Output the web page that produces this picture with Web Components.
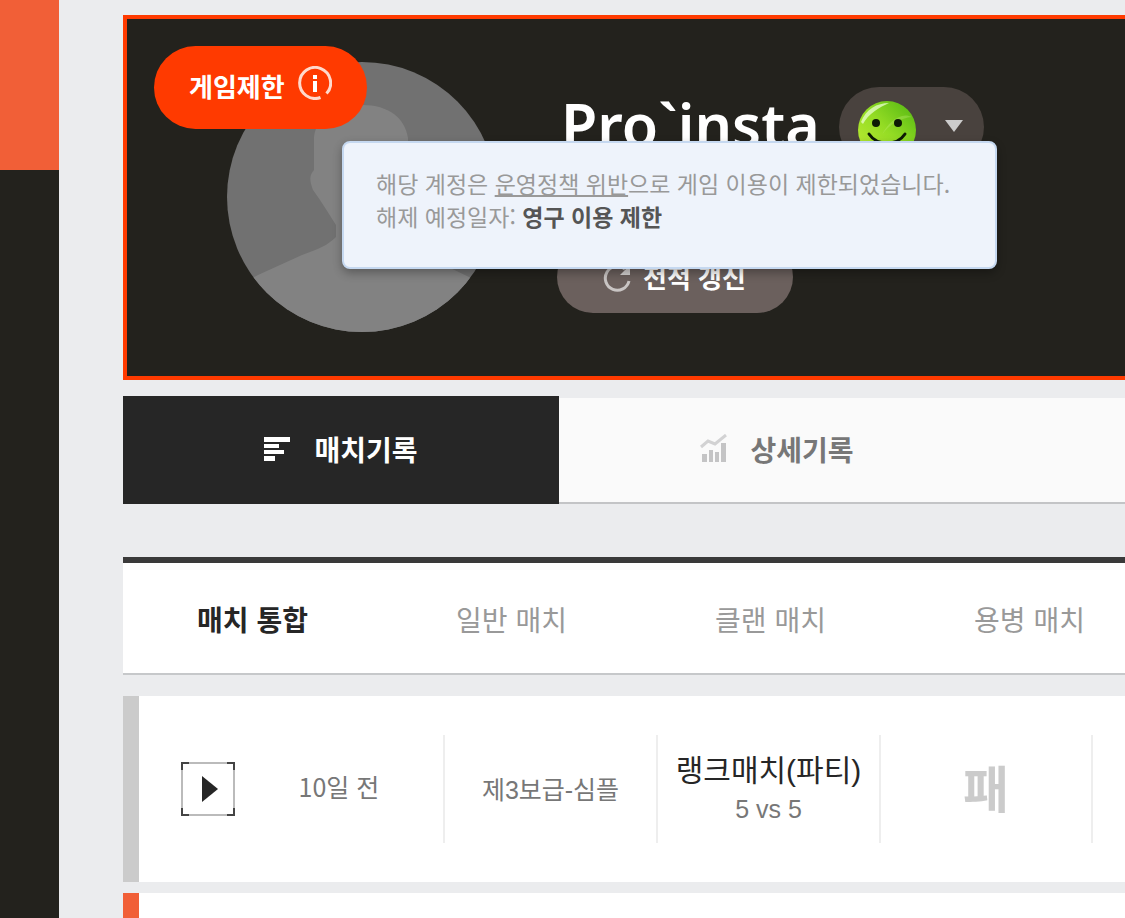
<!DOCTYPE html>
<html lang="ko">
<head>
<meta charset="utf-8">
<meta name="viewport" content="width=device-width, initial-scale=1">
<title>Pro`insta</title>
<style>
  html { overflow: hidden; }
  body {
    margin: 0;
    background: #ebecee;
    color: #262626;
    font-family: "Noto Sans CJK KR", sans-serif;
  }
</style>
</head>
<body>
<app-shell>
  <side-rail slot="rail"></side-rail>
  <profile-card>
    <restrict-badge slot="badge">게임제한</restrict-badge>
    <user-avatar slot="avatar"></user-avatar>
    <span slot="name">Pro`insta</span>
    <mood-picker slot="mood"></mood-picker>
    <refresh-button slot="action">전적 갱신</refresh-button>
    <notice-tip slot="tip"></notice-tip>
  </profile-card>
  <record-tabs></record-tabs>
  <match-filter></match-filter>
  <match-list>
    <match-row>
      <span slot="time">10일 전</span>
      <span slot="map">제3보급-심플</span>
      <span slot="mode">랭크매치(파티)</span>
      <span slot="size">5 vs 5</span>
      <span slot="result">패</span>
    </match-row>
    <match-row win></match-row>
  </match-list>
</app-shell>

<script>
  function define(name, html) {
    const template = document.createElement('template');
    template.innerHTML = html;
    customElements.define(name, class extends HTMLElement {
      constructor() {
        super();
        this.attachShadow({ mode: 'open' }).appendChild(template.content.cloneNode(true));
      }
    });
  }

  define('app-shell', `
    <style>
      :host { display: grid; grid-template-columns: 59px minmax(0, 1fr); height: 100vh; overflow: hidden; }
      main { display: flex; flex-direction: column; padding: 15px 0 0 64px; min-width: 0; overflow: hidden; }
    </style>
    <slot name="rail"></slot>
    <main><slot></slot></main>`);

  define('side-rail', `
    <style>
      :host { display: block; background: #23221d; }
      div { height: 170px; background: #f15f37; }
    </style>
    <div></div>`);

  define('profile-card', `
    <style>
      :host {
        display: flex; position: relative; flex: none; box-sizing: border-box; height: 365px;
        border: 4px solid #ff3a00; border-right: 0; background: #23221d;
        padding: 43px 0 0 100px; gap: 60px;
      }
      .badge { position: absolute; left: 27px; top: 27px; z-index: 1; }
      .tip { position: absolute; left: 215px; top: 122px; z-index: 2; }
      .info { display: flex; flex-direction: column; align-items: flex-start; padding-top: 25px; gap: 74px; }
      .who { display: flex; align-items: flex-start; height: 80px; }
      h1 { box-sizing: border-box; margin: 0; width: 282px; padding-left: 4px; color: #fff; font: 600 59px/74px "Noto Sans", sans-serif; white-space: nowrap; }
    </style>
    <div class="badge"><slot name="badge"></slot></div>
    <slot name="avatar"></slot>
    <div class="info">
      <div class="who"><h1><slot name="name"></slot></h1><slot name="mood"></slot></div>
      <slot name="action"></slot>
    </div>
    <div class="tip"><slot name="tip"></slot></div>`);

  define('restrict-badge', `
    <style>
      :host { display: block; }
      button {
        display: flex; align-items: center; gap: 13px; width: 213px; height: 83px; padding: 0 0 4px 35px;
        border: 0; border-radius: 42px; background: #ff3a00; color: #fff;
        font: 700 26px/38px "Noto Sans CJK KR", sans-serif; white-space: nowrap;
      }
      svg { flex: none; margin-bottom: 6px; }
    </style>
    <button type="button"><slot></slot>
      <svg width="34" height="34" viewBox="0 0 34 34" fill="none" stroke="#ffd9cc" stroke-width="3" aria-hidden="true">
        <path d="M22.5 31.5A15.500 15.500 0 1 1 28.500 27.500"/>
        <path d="M17 9v4M17 15v11" stroke="#fff" stroke-width="4"/>
      </svg>
    </button>`);

  define('user-avatar', `
    <style>:host { display: block; flex: none; width: 270px; height: 270px; } svg { display: block; }</style>
    <svg width="270" height="270" viewBox="0 0 270 270" role="img" aria-label="프로필">
      <defs><clipPath id="disc"><circle cx="135" cy="135" r="135"/></clipPath></defs>
      <g clip-path="url(#disc)">
        <path fill="#717171" d="M0 0h270v270H0z"/>
        <path fill="#828282" d="M87 75C90 54 108 43 135 43C162 43 178 56 181 76V104L186 108C187 124 177 139 162 159V173C166 181 178 187 194 192L240 214L270 230V270H0V230L31 213L75 193C92 187 101 183 109 175V163C102 152 94 139 86 128C81 115 84 112 87 108Z"/>
      </g>
    </svg>`);

  define('mood-picker', `
    <style>
      :host { display: block; }
      button { display: flex; align-items: center; gap: 28px; width: 145px; height: 80px; padding: 0 0 0 18px; border: 0; border-radius: 40px; background: #49423e; }
      svg { display: block; flex: none; }
      .face { margin-top: 8px; }
      .arrow { margin-bottom: 2px; }
    </style>
    <button type="button" aria-label="기분 선택">
      <svg class="face" width="60" height="60" viewBox="0 0 60 60" aria-hidden="true">
        <defs>
          <linearGradient id="g" x1="0" y1="1" x2="1" y2="0">
            <stop offset="0" stop-color="#c2ee35"/><stop offset=".5" stop-color="#94dc24"/><stop offset="1" stop-color="#4fb511"/>
          </linearGradient>
        </defs>
        <circle cx="30" cy="29" r="29" fill="url(#g)"/>
        <path d="M4 21C9 8 20 2 32 2C23 6 11 13 6 23Z" fill="#e9ffd2" opacity=".75"/>
        <path d="M25 34C30 22 44 10 55 16C44 17 32 23 25 34Z" fill="#c7f27d" opacity=".3"/>
        <circle cx="19" cy="22" r="4" fill="#0d1b05"/><circle cx="41" cy="22" r="4" fill="#0d1b05"/>
        <path d="M12 33C20 45 40 45 48 33" fill="none" stroke="#0d1b05" stroke-width="3" stroke-linecap="round"/>
      </svg>
      <svg class="arrow" width="18" height="12" viewBox="0 0 18 12" aria-hidden="true"><path d="M0 0H18L9 12Z" fill="#ccc"/></svg>
    </button>`);

  define('refresh-button', `
    <style>
      :host { display: block; }
      button {
        display: flex; align-items: center; gap: 12px; width: 236px; height: 72px; padding: 0 0 0 46px;
        border: 0; border-radius: 36px; background: #6b605d; color: #fff;
        font: 700 26px/38px "Noto Sans CJK KR", sans-serif; white-space: nowrap;
      }
      svg { flex: none; margin-top: 2px; }
    </style>
    <button type="button">
      <svg width="28" height="28" viewBox="0 0 28 28" aria-hidden="true">
        <path d="M26 17A12 12 0 1 1 22 5" fill="none" stroke="#c9c5c4" stroke-width="3"/>
        <path d="M27 1V11H17Z" fill="#d5d2d1"/>
      </svg><slot></slot>
    </button>`);

  define('notice-tip', `
    <style>
      :host {
        display: block; box-sizing: border-box; width: 655px; padding: 24px 0 34px 32px;
        border: 2px solid #c5d8f0; border-radius: 8px; background: #eef3fb;
        box-shadow: 0 4px 10px rgba(0, 0, 0, .3);
        color: #999; font-size: 23px; line-height: 33px; white-space: nowrap;
      }
      p { margin: 0; }
      a { color: inherit; text-decoration: underline; }
      strong { color: #555; font-weight: 700; }
    </style>
    <div role="tooltip">
      <p>해당 계정은 <a href="#policy">운영정책 위반</a>으로 게임 이용이 제한되었습니다.</p>
      <p>해제 예정일자: <strong>영구 이용 제한</strong></p>
    </div>`);

  define('record-tabs', `
    <style>
      :host { display: block; flex: none; margin-top: 16px; }
      nav { display: flex; height: 108px; }
      a {
        display: flex; flex: 0 0 436px; box-sizing: border-box; align-items: center; justify-content: center; gap: 23px;
        margin-top: 2px; padding-bottom: 2px; border-bottom: 2px solid #c3c4c6; background: #fafafa; color: #777;
        font-size: 28px; font-weight: 700; line-height: 42px; text-decoration: none;
      }
      a[aria-current] { margin-top: 0; border: 0; background: #262626; color: #fff; }
      svg { flex: none; }
    </style>
    <nav>
      <a href="#matches" aria-current="page">
        <svg width="27" height="26" viewBox="0 0 27 26" fill="#fff" aria-hidden="true"><path d="M0 1h26v5H0zM0 8h15v4H0zM0 14h20v4H0zM0 20h11v5H0z"/></svg>
        매치기록
      </a>
      <a href="#details">
        <svg width="27" height="30" viewBox="0 0 27 30" aria-hidden="true">
          <path d="M1 13L8 7L15 10L26 1" fill="none" stroke="#d2d2d3" stroke-width="3"/>
          <path d="M2 20h5v8H2zM9 16h4v12H9zM15 18h4v10h-4zM21 9h5v19h-5z" fill="#c4c4c5"/>
        </svg>
        상세기록
      </a>
      <a href="#more" aria-label="더보기"></a>
    </nav>`);

  define('match-filter', `
    <style>
      :host { display: block; flex: none; margin-top: 53px; border-top: 6px solid #3a3a3a; border-bottom: 2px solid #c6c8ca; background: #fff; }
      nav { display: flex; height: 110px; }
      a { flex: 0 0 259px; color: #999; font-size: 28px; line-height: 112px; text-align: center; text-decoration: none; }
      a[aria-current] { color: #262626; font-weight: 700; }
    </style>
    <nav>
      <a href="#all" aria-current="page">매치 통합</a>
      <a href="#normal">일반 매치</a>
      <a href="#clan">클랜 매치</a>
      <a href="#mercenary">용병 매치</a>
    </nav>`);

  define('match-list', `
    <style>:host { display: flex; flex: none; flex-direction: column; gap: 11px; margin-top: 21px; }</style>
    <slot></slot>`);

  define('match-row', `
    <style>
      :host { display: flex; align-items: center; box-sizing: border-box; height: 186px; padding-left: 42px; border-left: 16px solid #cbcbcb; background: #fff; color: #777; font-size: 25px; line-height: 38px; white-space: nowrap; }
      :host([win]) { border-color: #f15f37; }
      button { display: block; flex: none; padding: 0; border: 0; background: none; }
      svg { display: block; }
      .cell { display: flex; flex: none; flex-direction: column; align-items: center; justify-content: center; box-sizing: border-box; height: 108px; border-right: 2px solid #eee; }
      .time { width: 210px; padding-bottom: 6px; }
      .map { width: 213px; padding-top: 2px; font-family: "Liberation Sans", "Noto Sans CJK KR", sans-serif; }
      .mode { width: 223px; padding-top: 2px; font-family: "Liberation Sans", "Noto Sans CJK KR", sans-serif; }
      .mode b { color: #262626; font-size: 30px; font-weight: 400; }
      .result { width: 212px; padding-bottom: 6px; color: #cbcbcb; font-size: 50px; font-weight: 700; line-height: 70px; }
    </style>
    <button type="button" aria-label="재생">
      <svg width="54" height="54" viewBox="0 0 54 54" aria-hidden="true">
        <path d="M1 1H53V53H1Z" fill="none" stroke="#bbb" stroke-width="2"/>
        <path d="M1 8V1H8M46 1H53V8M53 46V53H46M8 53H1V46" fill="none" stroke="#444" stroke-width="2"/>
        <path d="M21 14L37 27L21 40Z" fill="#262626"/>
      </svg>
    </button>
    <div class="cell time"><slot name="time"></slot></div>
    <div class="cell map"><slot name="map"></slot></div>
    <div class="cell mode"><b><slot name="mode"></slot></b><slot name="size"></slot></div>
    <div class="cell result"><slot name="result"></slot></div>`);
</script>
</body>
</html>
